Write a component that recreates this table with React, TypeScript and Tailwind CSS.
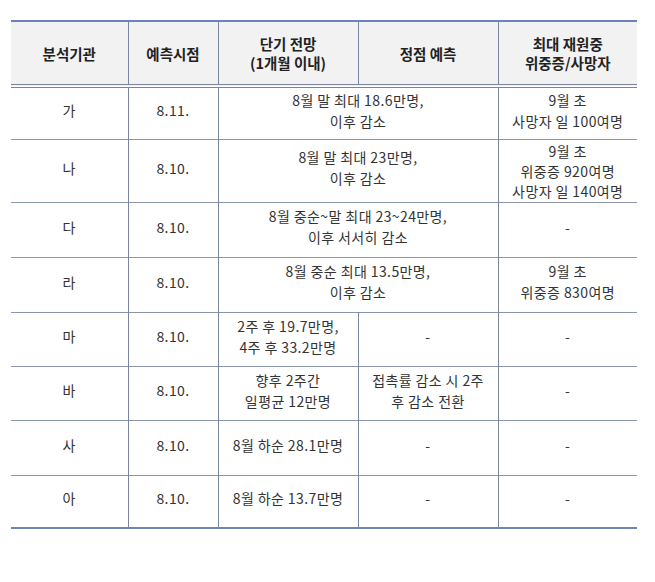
const font = { fontFamily: '"Noto Sans CJK KR", "Noto Sans", sans-serif' };

type Row = {
  org: string;
  date: string;
  cells: { text: string[]; span?: number }[];
  h: string;
};

const rows: Row[] = [
  { org: '가', date: '8.11.', h: 'h-[53px]', cells: [{ text: ['8월 말 최대 18.6만명,', '이후 감소'], span: 2 }, { text: ['9월 초', '사망자 일 100여명'] }] },
  { org: '나', date: '8.10.', h: 'h-[63px]', cells: [{ text: ['8월 말 최대 23만명,', '이후 감소'], span: 2 }, { text: ['9월 초', '위중증 920여명', '사망자 일 140여명'] }] },
  { org: '다', date: '8.10.', h: 'h-[55px]', cells: [{ text: ['8월 중순~말 최대 23~24만명,', '이후 서서히 감소'], span: 2 }, { text: ['-'] }] },
  { org: '라', date: '8.10.', h: 'h-[55px]', cells: [{ text: ['8월 중순 최대 13.5만명,', '이후 감소'], span: 2 }, { text: ['9월 초', '위중증 830여명'] }] },
  { org: '마', date: '8.10.', h: 'h-[54px]', cells: [{ text: ['2주 후 19.7만명,', '4주 후 33.2만명'] }, { text: ['-'] }, { text: ['-'] }] },
  { org: '바', date: '8.10.', h: 'h-[54px]', cells: [{ text: ['향후 2주간', '일평균 12만명'] }, { text: ['접촉률 감소 시 2주', '후 감소 전환'] }, { text: ['-'] }] },
  { org: '사', date: '8.10.', h: 'h-[55px]', cells: [{ text: ['8월 하순 28.1만명'] }, { text: ['-'] }, { text: ['-'] }] },
  { org: '아', date: '8.10.', h: 'h-[53px]', cells: [{ text: ['8월 하순 13.7만명'] }, { text: ['-'] }, { text: ['-'] }] },
];

const headCell = 'border-l border-[#7a86a0] first:border-l-0 text-center align-middle p-0';
const bodyCell = 'border-l border-[#7a86a0] first:border-l-0 text-center align-middle px-0 pt-0 pb-[5px]';
const tallCell = 'border-l border-[#7a86a0] first:border-l-0 text-center align-middle p-0 leading-[20px]';

export default function App() {
  return (
    <div className="w-[655px] h-[582px] bg-white pt-[20px] pl-[11px]" style={font}>
      <table className="w-[626px] table-fixed border-collapse text-[14px] leading-[21px] tracking-[0.4px] text-[#333]">
        <colgroup>
          <col className="w-[117px]" />
          <col className="w-[90px]" />
          <col className="w-[140px]" />
          <col className="w-[140px]" />
          <col className="w-[139px]" />
        </colgroup>
        <thead>
          <tr className="h-[65px] bg-[#f2f2f2] border-t-2 border-t-[#6f80c0] border-b-4 border-double border-b-[#7a86a0] text-[14.5px] leading-[19px] tracking-normal font-bold text-[#222]">
            <th className={headCell}>분석기관</th>
            <th className={headCell}>예측시점</th>
            <th className={headCell}>단기 전망<br />(1개월 이내)</th>
            <th className={headCell}>정점 예측</th>
            <th className={headCell}>최대 재원중<br />위중증/사망자</th>
          </tr>
        </thead>
        <tbody>
          {rows.map((r, i) => (
            <tr
              key={r.org}
              className={`${r.h} ${i === rows.length - 1 ? 'border-b-2 border-b-[#6f86b8]' : 'border-b border-b-[#8a96ae]'}`}
            >
              <td className={bodyCell}>{r.org}</td>
              <td className={bodyCell}>{r.date}</td>
              {r.cells.map((c, j) => (
                <td key={j} colSpan={c.span ?? 1} className={c.text.length > 2 ? tallCell : bodyCell}>
                  {c.text.map((t, k) => (
                    <div key={k}>{t}</div>
                  ))}
                </td>
              ))}
            </tr>
          ))}
        </tbody>
      </table>
    </div>
  );
}
